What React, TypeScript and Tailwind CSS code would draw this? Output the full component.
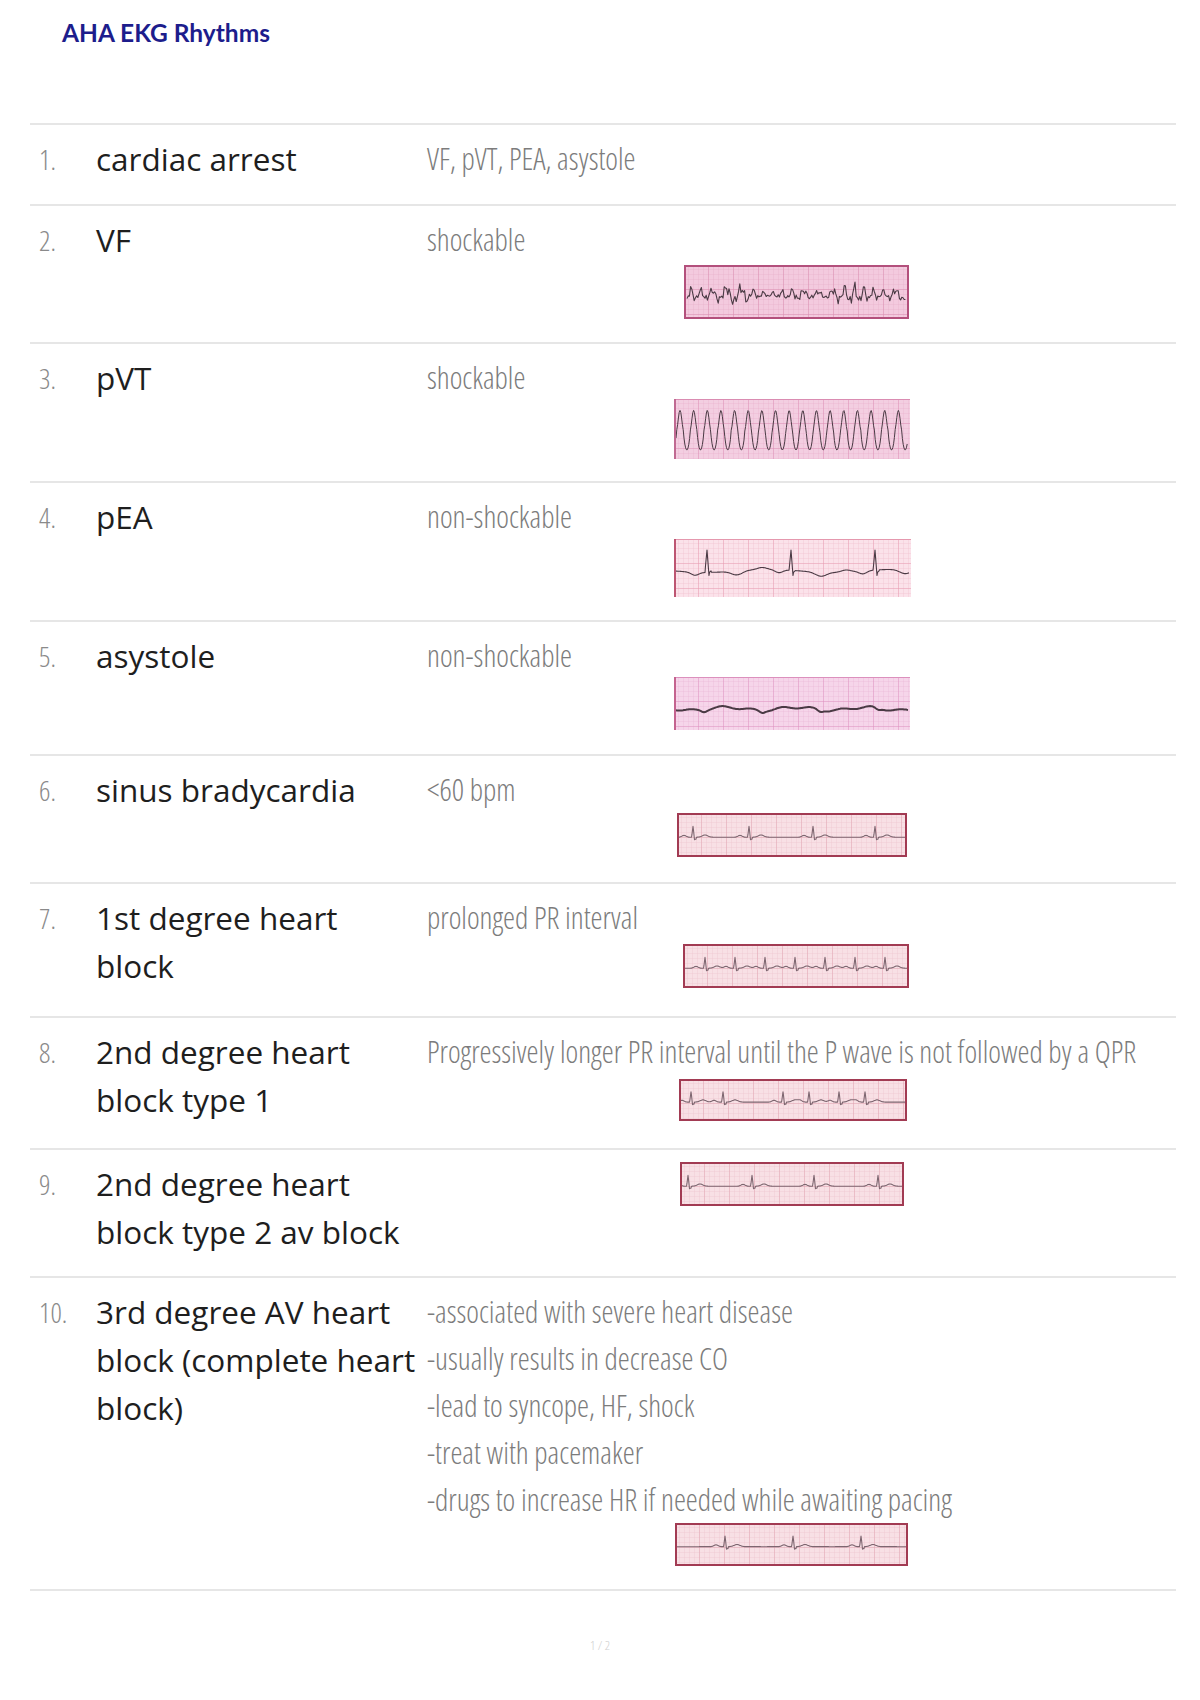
import { useId } from "react";

type Kind = "vf" | "vt" | "pea" | "asys" | "beats";

type Strip = {
  w: number;
  h: number;
  pos: string;
  kind: Kind;
  beats?: number[];
};

type Row = {
  n: string;
  title: string[];
  desc: string[];
  pb: string;
  strip?: Strip;
};

const rows: Row[] = [
  { n: "1.", title: ["cardiac arrest"], desc: ["VF, pVT, PEA, asystole"], pb: "pb-[21px]" },
  {
    n: "2.",
    title: ["VF"],
    desc: ["shockable"],
    pb: "pb-[23px]",
    strip: { w: 225, h: 54, pos: "ml-[257px] mt-[2px]", kind: "vf" },
  },
  {
    n: "3.",
    title: ["pVT"],
    desc: ["shockable"],
    pb: "pb-[22px]",
    strip: { w: 236, h: 60, pos: "ml-[247px] -mt-[2px]", kind: "vt" },
  },
  {
    n: "4.",
    title: ["pEA"],
    desc: ["non-shockable"],
    pb: "pb-[23px]",
    strip: { w: 237, h: 58, pos: "ml-[247px] -mt-[1px]", kind: "pea" },
  },
  {
    n: "5.",
    title: ["asystole"],
    desc: ["non-shockable"],
    pb: "pb-[24px]",
    strip: { w: 236, h: 53, pos: "ml-[247px] -mt-[2px]", kind: "asys" },
  },
  {
    n: "6.",
    title: ["sinus bradycardia"],
    desc: ["<60 bpm"],
    pb: "pb-[25px]",
    strip: { w: 230, h: 44, pos: "ml-[250px] mt-0", kind: "beats", beats: [16, 72, 136, 198] },
  },
  {
    n: "7.",
    title: ["1st degree heart", "block"],
    desc: ["prolonged PR interval"],
    pb: "pb-[26px]",
    strip: {
      w: 226,
      h: 44,
      pos: "ml-[256px] mt-[3px]",
      kind: "beats",
      beats: [22, 52, 82, 112, 142, 172, 202],
    },
  },
  {
    n: "8.",
    title: ["2nd degree heart", "block type 1"],
    desc: ["Progressively longer PR interval until the P wave is not followed by a QPR"],
    pb: "pb-[24px]",
    strip: { w: 228, h: 42, pos: "ml-[252px] mt-[4px]", kind: "beats", beats: [12, 44, 104, 130, 160, 186] },
  },
  {
    n: "9.",
    title: ["2nd degree heart", "block type 2 av block"],
    desc: [],
    pb: "pb-[20px]",
    strip: { w: 224, h: 44, pos: "ml-[253px] mt-[2px]", kind: "beats", beats: [8, 72, 134, 198] },
  },
  {
    n: "10.",
    title: ["3rd degree AV heart", "block (complete heart", "block)"],
    desc: [
      "-associated with severe heart disease",
      "-usually results in decrease CO",
      "-lead to syncope, HF, shock",
      "-treat with pacemaker",
      "-drugs to increase HR if needed while awaiting pacing",
    ],
    pb: "pb-[23px]",
    strip: { w: 233, h: 43, pos: "ml-[248px] mt-0", kind: "beats", beats: [50, 118, 186] },
  },
];

const palette: Record<Kind, { bg: string; grid: string; major: string; frame: string; full: boolean }> = {
  vf: { bg: "#f3cade", grid: "#e6a9c6", major: "#d987ad", frame: "#b3507c", full: true },
  vt: { bg: "#f3cee1", grid: "#e7abc8", major: "#da8cb2", frame: "#c06a92", full: false },
  pea: { bg: "#fbe2ea", grid: "#f0b8c9", major: "#e598ae", frame: "#bd5672", full: false },
  asys: { bg: "#f6d5ea", grid: "#eab0d2", major: "#dc90bd", frame: "#c4638f", full: false },
  beats: { bg: "#f8e0e5", grid: "#edc0ca", major: "#dfa0ae", frame: "#a23b53", full: true },
};

function wave(s: Strip): string {
  const { w, h, kind } = s;
  const pts: [number, number][] = [];
  if (kind === "vf") {
    for (let x = 3; x <= w - 3; x += 1.2) {
      const a = 7 + 2.5 * Math.sin(x * 0.045) + 2.5 * Math.sin(x * 0.11 + 2);
      const y =
        h * 0.55 +
        a *
          (Math.sin(x * 0.55 + Math.sin(x * 0.07) * 2) +
            0.6 * Math.sin(x * 1.31 + 1.3) +
            0.35 * Math.sin(x * 2.45 + 0.4)) *
          0.6;
      pts.push([x, y]);
    }
  } else if (kind === "vt") {
    const period = (w - 4) / 17;
    for (let x = 2; x <= w - 2; x += 0.8) {
      const c = Math.cos(((x - 6) / period) * Math.PI * 2);
      const sh = c > 0 ? Math.pow(c, 1.6) : -Math.pow(-c, 0.7);
      pts.push([x, h * 0.52 - sh * h * 0.33]);
    }
  } else if (kind === "asys") {
    for (let x = 2; x <= w - 2; x += 1) {
      const y =
        h * 0.6 +
        1.6 * Math.sin(x * 0.09) +
        1.2 * Math.sin(x * 0.21 + 1) +
        1.8 * Math.exp(-Math.pow((x % 58) - 30, 2) / 12);
      pts.push([x, y]);
    }
  } else if (kind === "pea") {
    const base = h * 0.55;
    const spikes = [33, 117, 201];
    for (let x = 2; x <= w - 2; x += 0.5) {
      let y = base + 1.5 * Math.sin(x * 0.05);
      for (const sx of spikes) {
        const d = x - sx;
        if (d > -2 && d <= 0) y = base + (d + 2) * -h * 0.18;
        else if (d > 0 && d <= 2) y = base - h * 0.36 + d * h * 0.22;
        else if (d > 2 && d <= 4) y = base + 2 - (d - 2) * 1;
        y += 3 * Math.exp(-Math.pow(d + 12, 2) / 30);
        y += 4 * Math.exp(-Math.pow(d - 30, 2) / 60);
        y -= 2 * Math.exp(-Math.pow(d - 55, 2) / 40);
      }
      pts.push([x, y]);
    }
  } else {
    const base = h * 0.55;
    const beats = s.beats ?? [];
    for (let x = 2; x <= w - 2; x += 0.5) {
      let y = base;
      for (const bx of beats) {
        const d = x - bx;
        if (d > -1.5 && d <= 0) y = base + 1 + (d + 1.5) * -h * 0.18;
        else if (d > 0 && d <= 1.5) y = base - h * 0.27 + d * h * 0.22;
        else if (d > 1.5 && d <= 3) y = base + 2;
        y -= 1.8 * Math.exp(-Math.pow(d + 9, 2) / 8);
        y -= 2.2 * Math.exp(-Math.pow(d - 12, 2) / 16);
      }
      pts.push([x, y]);
    }
  }
  return "M" + pts.map((p) => p[0].toFixed(1) + "," + p[1].toFixed(1)).join("L");
}

function EkgStrip({ strip }: { strip: Strip }) {
  const id = useId().replace(/:/g, "");
  const c = palette[strip.kind];
  const { w, h } = strip;
  return (
    <svg width={w} height={h} viewBox={`0 0 ${w} ${h}`} className="block">
      <defs>
        <pattern id={`g${id}`} width="5" height="5" patternUnits="userSpaceOnUse">
          <path d="M5 0V5M0 5H5" stroke={c.grid} strokeWidth="0.6" fill="none" />
        </pattern>
        <pattern id={`m${id}`} width="25" height="25" patternUnits="userSpaceOnUse">
          <path d="M25 0V25M0 25H25" stroke={c.major} strokeWidth="0.9" fill="none" />
        </pattern>
      </defs>
      <rect width={w} height={h} fill={c.bg} />
      <rect width={w} height={h} fill={`url(#g${id})`} />
      <rect width={w} height={h} fill={`url(#m${id})`} />
      <path
        d={wave(strip)}
        fill="none"
        stroke={strip.kind === "beats" ? "#7d6670" : "#4a3a44"}
        strokeWidth={strip.kind === "asys" ? 2 : strip.kind === "vt" ? 1 : 1.1}
        strokeLinejoin="round"
      />
      {c.full ? (
        <rect x="1" y="1" width={w - 2} height={h - 2} fill="none" stroke={c.frame} strokeWidth="2" />
      ) : (
        <>
          <line x1="0" y1="0.5" x2={w} y2="0.5" stroke={c.major} strokeWidth="1" />
          <line x1="1" y1="0" x2="1" y2={h} stroke={c.frame} strokeWidth="2" />
        </>
      )}
    </svg>
  );
}

const light = "font-['Open_Sans','Noto_Sans',sans-serif] font-light [font-stretch:condensed]";

export default function App() {
  return (
    <div className="w-[1200px] min-h-[1700px] bg-white">
      <h1 className="pl-[62px] pt-[18px] text-[24.5px] leading-[30px] font-bold text-[#1d1d8c] font-['Lato','Open_Sans',sans-serif]">
        AHA EKG Rhythms
      </h1>

      <div className="ml-[30px] mr-[24px] mt-[75px] border-b-2 border-[#e6e6e6]">
        {rows.map((r) => (
          <div
            key={r.n}
            className={`grid grid-cols-[66px_331px_1fr] border-t-2 border-[#e6e6e6] pt-[10px] ${r.pb}`}
          >
            <div className={`pl-[9px] text-[28px] leading-[48px] text-[#8a8a8a] ${light}`}>{r.n}</div>
            <div className="text-[31.5px] leading-[48px] text-[#1e1e1e] font-['Open_Sans','Noto_Sans',sans-serif] whitespace-nowrap">
              {r.title.map((t) => (
                <div key={t}>{t}</div>
              ))}
            </div>
            <div>
              {r.desc.length > 0 && (
                <div className={`text-[30.3px] leading-[47px] text-[#7c7c7c] whitespace-nowrap ${light}`}>
                  {r.desc.map((d) => (
                    <div key={d}>{d}</div>
                  ))}
                </div>
              )}
              {r.strip && (
                <div className={r.strip.pos}>
                  <EkgStrip strip={r.strip} />
                </div>
              )}
            </div>
          </div>
        ))}
      </div>

      <div className={`mt-[44px] text-center text-[13px] leading-[20px] text-[#d0d0d0] ${light}`}>1 / 2</div>
    </div>
  );
}
